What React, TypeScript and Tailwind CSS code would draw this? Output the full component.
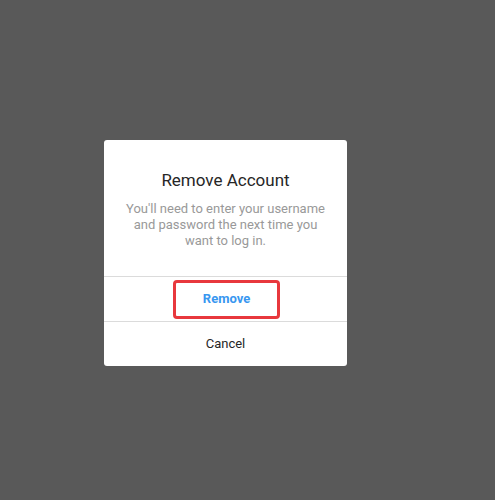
const App = () => (
  <div className="h-[500px] w-full bg-[#595959] pt-[140px] pl-[104px]" style={{ fontFamily: 'Roboto, "Liberation Sans", sans-serif' }}>
    <div className="w-[243px] rounded-[3px] bg-white">
      <div className="px-4 pt-[30px] pb-[27px] text-center">
        <h2 className="text-[17px] leading-[20px] text-[#262626]">Remove Account</h2>
        <p className="mt-[11px] text-[13px] leading-[16px] text-[#999999]">
          You'll need to enter your username and password the next time you want to log in.
        </p>
      </div>
      <div className="flex h-[45px] items-center justify-center border-t border-[#dbdbdb]">
        <div className="ml-[2px] flex h-[39px] w-[107px] items-center justify-center rounded-[4px] border-[3px] border-[#e8383d]">
          <span className="text-[13px] font-bold text-[#3897f0]">Remove</span>
        </div>
      </div>
      <div className="flex h-[45px] items-center justify-center border-t border-[#dbdbdb]">
        <span className="text-[13px] text-[#262626]">Cancel</span>
      </div>
    </div>
  </div>
);

export default App;
